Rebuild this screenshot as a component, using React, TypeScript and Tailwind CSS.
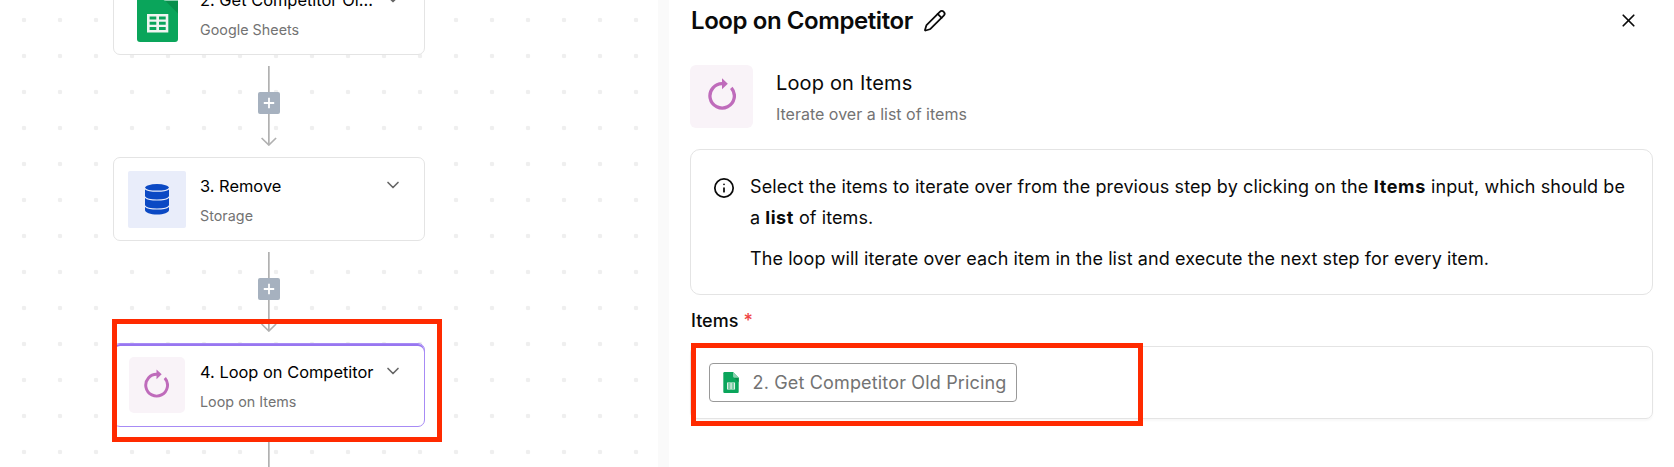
import React from 'react';
import { ChevronDown, Info, Pencil, X } from 'lucide-react';

function SheetsLogo({ className }: { className: string }) {
  return (
    <svg viewBox="0 0 41 56" className={className}>
      <path d="M3 0H26L41 15V53a3 3 0 0 1-3 3H3a3 3 0 0 1-3-3V3a3 3 0 0 1 3-3Z" fill="#0aa55b" />
      <path d="M27.5 14 41 27.5V15Z" fill="#08904c" />
      <path d="M26 0 41 15H29a3 3 0 0 1-3-3Z" fill="#8bd1b0" />
      <path
        fillRule="evenodd"
        fill="#f0f5f1"
        d="M10 28H31.3V46.5H10ZM12.6 30.5V33.5H19.3V30.5ZM22 30.5V33.5H28.7V30.5ZM12.6 35.7V38.8H19.3V35.7ZM22 35.7V38.8H28.7V35.7ZM12.6 41V44H19.3V41ZM22 41V44H28.7V41Z"
      />
    </svg>
  );
}

function DatabaseIcon() {
  return (
    <svg viewBox="0 0 24 31" className="h-[31px] w-6">
      <path d="M0 4.5V26C0 28.6 5.4 30.5 12 30.5S24 28.6 24 26V4.5Z" fill="#0b49c4" />
      <ellipse cx="12" cy="4" rx="12" ry="4" fill="#0b49c4" />
      <g fill="none" stroke="#e9edfa" strokeWidth="1.2">
        <path d="M-.5 4C1 6.6 6 7.2 12 7.200S23 6.6 24.5 4" />
        <path d="M-.5 12.5C1 15 6 16 12 16S23 15 24.5 12.5" />
        <path d="M-.5 21.5C1 24 6 25 12 25S23 24 24.5 21.5" />
      </g>
    </svg>
  );
}

function LoopIcon({ className }: { className: string }) {
  return (
    <svg viewBox="0 0 28 32" className={className}>
      <path d="M23.3 9.8A12.2 12.2 0 1 1 15 5.7" fill="none" stroke="#bf6bbb" strokeWidth="3.3" />
      <path d="M14 .2 19.800 5.7 14 11.2Z" fill="#bf6bbb" />
    </svg>
  );
}

function Connector({ className, arrow = true }: { className: string; arrow?: boolean }) {
  return (
    <div className={`absolute left-[257px] h-20 w-6 ${className}`}>
      <svg viewBox="0 0 24 80" className="h-20 w-6" fill="none" stroke="#b1b1b1" strokeWidth="1.7">
        <path d="M11.85 0V79" />
        {arrow && <path d="M4.6 72 11.85 79 19.1 72" />}
      </svg>
      {arrow && (
        <div className="absolute top-[26px] left-[0.7px] flex h-[21.5px] w-[22px] items-center justify-center rounded-[2px] bg-[#a6b1bf]">
          <svg viewBox="0 0 12 12" className="h-3 w-3" stroke="#ffffff" strokeWidth="1.8">
            <path d="M6 .8V11.2M.8 6H11.2" />
          </svg>
        </div>
      )}
    </div>
  );
}

interface StepProps {
  title: string;
  subtitle: string;
  className: string;
  icon: React.ReactNode;
}

function Step({ title, subtitle, className, icon }: StepProps) {
  return (
    <div className={`absolute left-[113px] flex h-[84px] w-[312px] rounded-[7px] border bg-white pt-[13px] pl-[14px] ${className}`}>
      <div className="flex h-[58px] w-[58px] shrink-0 justify-start">{icon}</div>
      <div className="ml-[14px] flex w-[174px] flex-col whitespace-nowrap">
        <div className="mt-[3px] h-6 text-[16.4px] leading-6 tracking-[0.01px] text-black">{title}</div>
        <div className="mt-[8px] h-5 text-[14.3px] leading-5 tracking-[0.03px] text-[#737373]">{subtitle}</div>
      </div>
      <ChevronDown className="mt-[4px] ml-[8.5px] h-5 w-5 shrink-0 text-[#666666]" strokeWidth={2} />
    </div>
  );
}

function Canvas() {
  return (
    <section className="relative h-full w-[658px] shrink-0 overflow-hidden bg-white bg-[radial-gradient(circle_at_18px_18px,#efefef_2px,transparent_2.6px)] bg-[length:36px_36px] bg-[position:6px_2px]">
      <Step
        title="2. Get Competitor Ol..."
        subtitle="Google Sheets"
        className="top-[-29px] border-[#e4e4e4]"
        icon={<SheetsLogo className="mt-[1px] ml-[8.5px] h-[56px] w-[41px]" />}
      />
      <Connector className="top-[66px]" />
      <Step
        title="3. Remove"
        subtitle="Storage"
        className="top-[157px] border-[#e4e4e4]"
        icon={
          <div className="flex h-[57px] w-[58px] items-center justify-center rounded-[2px] bg-[#e9edfa]">
            <DatabaseIcon />
          </div>
        }
      />
      <Connector className="top-[252px]" />
      <Step
        title="4. Loop on Competitor"
        subtitle="Loop on Items"
        className="top-[343px] border-[#a78bf5] shadow-[inset_0_2px_0_#9876f0]"
        icon={
          <div className="ml-[0.5px] flex h-[56px] w-[56px] justify-center rounded-[5px] bg-[#f9f3f8] pt-[12px]">
            <LoopIcon className="h-[29px] w-[25px]" />
          </div>
        }
      />
      <Connector className="top-[438px]" arrow={false} />
      <div className="absolute top-[319px] left-[112px] h-[123px] w-[330px] border-[5px] border-[#ff2a00]" />
    </section>
  );
}

function Panel() {
  return (
    <section className="flex h-full flex-1 flex-col bg-white pr-[21px] pl-[21px]">
      <header className="flex h-[42px] items-center justify-between pr-[14px]">
        <div className="flex items-center">
          <h1 className="w-[232.5px] pl-[1px] text-[24px] leading-8 font-semibold tracking-[-0.42px] whitespace-nowrap text-[#0a0a0a]">
            Loop on Competitor
          </h1>
          <Pencil className="h-[23.5px] w-[23.5px] text-[#0a0a0a]" strokeWidth={1.8} />
        </div>
        <X className="mb-[1px] h-[21px] w-[21px] text-[#0a0a0a]" strokeWidth={2} />
      </header>

      <div className="mt-[23px] flex h-[63px]">
        <div className="flex h-[63px] w-[63px] justify-center rounded-[6px] bg-[#f9f3f8] pt-[13px]">
          <LoopIcon className="h-[32px] w-[28px]" />
        </div>
        <div className="ml-[23px] whitespace-nowrap">
          <div className="mt-[4px] text-[20px] leading-7 tracking-[0.16px] text-[#0a0a0a]">Loop on Items</div>
          <div className="mt-[5px] text-[16px] leading-6 text-[#737373]">Iterate over a list of items</div>
        </div>
      </div>

      <div className="mt-[21px] flex h-[146px] w-[963px] rounded-[10px] border border-[#e4e4e4] pt-[21px] pl-[22px] text-[#0a0a0a]">
        <Info className="mt-[5.5px] h-[22px] w-[22px] shrink-0" strokeWidth={1.9} />
        <div className="ml-[15px] text-[18px] leading-[31px] tracking-[0.088px] whitespace-nowrap">
          <p>
            <span className="tracking-[0.11px]">
              Select the items to iterate over from the previous step by clicking on the{' '}
            </span>
            <strong className="tracking-[0.65px]">Items</strong> input, which should be
            <br />a <strong className="tracking-[0.5px]">list</strong> of items.
          </p>
          <p className="mt-[10px]">The loop will iterate over each item in the list and execute the next step for every item.</p>
        </div>
      </div>

      <div className="mt-[14px] flex h-[24px] gap-[5px] pl-[1px] text-[18px] leading-[24px] font-medium text-[#0a0a0a]">
        <span>Items</span>
        <span className="text-[#f04444]">*</span>
      </div>

      <div className="relative mt-[13px] flex h-[73px] w-[963px] items-center rounded-[7px] border border-[#e4e4e4] pl-[18px] shadow-[0_2px_2px_rgba(0,0,0,0.03)]">
        <div className="flex h-[39px] w-[308px] items-center rounded-[4px] border border-[#999999] pl-[13px] text-[18px] leading-6 tracking-[0.16px] whitespace-nowrap text-[#737373]">
          <SheetsLogo className="mr-[13.5px] h-[21px] w-[16px]" />
          2. Get Competitor Old Pricing
        </div>
        <div className="absolute top-[-4px] left-0 h-[83px] w-[452px] border-[5px] border-[#ff2a00]" />
      </div>
    </section>
  );
}

export default function App() {
  return (
    <main className="flex h-[467px] w-[1674px] overflow-hidden bg-white font-['Inter',sans-serif]">
      <Canvas />
      <div className="h-full w-[11px] shrink-0 bg-[#fafafa]" />
      <Panel />
    </main>
  );
}
